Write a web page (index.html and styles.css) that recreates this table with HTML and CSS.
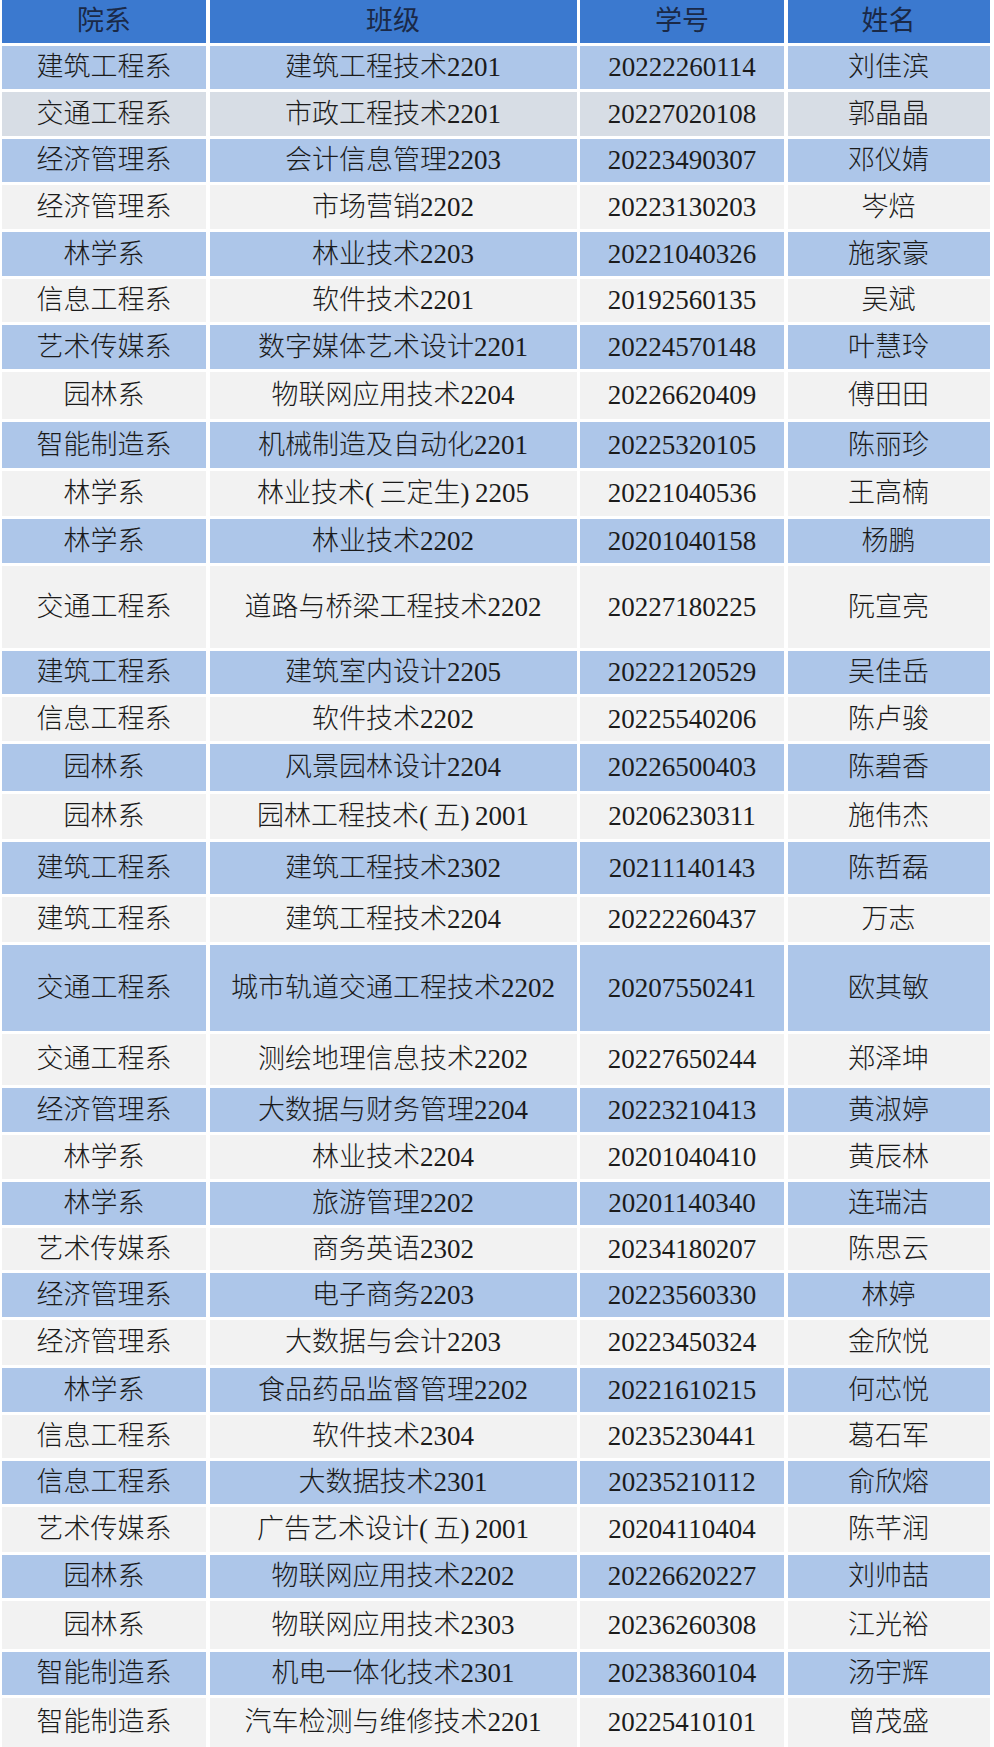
FILE: index.html
```html
<!DOCTYPE html>
<html lang="zh-CN">
<head>
<meta charset="utf-8">
<title>名单</title>
<link rel="stylesheet" href="styles.css">
</head>
<body>
<div class="sheet">
  <div class="row head"><div>院系</div><div>班级</div><div>学号</div><div>姓名</div></div>
  <div class="row blue"><div>建筑工程系</div><div>建筑工程技术2201</div><div>20222260114</div><div>刘佳滨</div></div>
  <div class="row slate"><div>交通工程系</div><div>市政工程技术2201</div><div>20227020108</div><div>郭晶晶</div></div>
  <div class="row blue"><div>经济管理系</div><div>会计信息管理2203</div><div>20223490307</div><div>邓仪婧</div></div>
  <div class="row grey"><div>经济管理系</div><div>市场营销2202</div><div>20223130203</div><div>岑焙</div></div>
  <div class="row blue"><div>林学系</div><div>林业技术2203</div><div>20221040326</div><div>施家豪</div></div>
  <div class="row grey"><div>信息工程系</div><div>软件技术2201</div><div>20192560135</div><div>吴斌</div></div>
  <div class="row blue"><div>艺术传媒系</div><div>数字媒体艺术设计2201</div><div>20224570148</div><div>叶慧玲</div></div>
  <div class="row grey"><div>园林系</div><div>物联网应用技术2204</div><div>20226620409</div><div>傅田田</div></div>
  <div class="row blue"><div>智能制造系</div><div>机械制造及自动化2201</div><div>20225320105</div><div>陈丽珍</div></div>
  <div class="row grey"><div>林学系</div><div>林业技术(&thinsp;三定生)&thinsp;2205</div><div>20221040536</div><div>王高楠</div></div>
  <div class="row blue"><div>林学系</div><div>林业技术2202</div><div>20201040158</div><div>杨鹏</div></div>
  <div class="row grey"><div>交通工程系</div><div>道路与桥梁工程技术2202</div><div>20227180225</div><div>阮宣亮</div></div>
  <div class="row blue"><div>建筑工程系</div><div>建筑室内设计2205</div><div>20222120529</div><div>吴佳岳</div></div>
  <div class="row grey"><div>信息工程系</div><div>软件技术2202</div><div>20225540206</div><div>陈卢骏</div></div>
  <div class="row blue"><div>园林系</div><div>风景园林设计2204</div><div>20226500403</div><div>陈碧香</div></div>
  <div class="row grey"><div>园林系</div><div>园林工程技术(&thinsp;五)&thinsp;2001</div><div>20206230311</div><div>施伟杰</div></div>
  <div class="row blue"><div>建筑工程系</div><div>建筑工程技术2302</div><div>20211140143</div><div>陈哲磊</div></div>
  <div class="row grey"><div>建筑工程系</div><div>建筑工程技术2204</div><div>20222260437</div><div>万志</div></div>
  <div class="row blue"><div>交通工程系</div><div>城市轨道交通工程技术2202</div><div>20207550241</div><div>欧其敏</div></div>
  <div class="row grey"><div>交通工程系</div><div>测绘地理信息技术2202</div><div>20227650244</div><div>郑泽坤</div></div>
  <div class="row blue"><div>经济管理系</div><div>大数据与财务管理2204</div><div>20223210413</div><div>黄淑婷</div></div>
  <div class="row grey"><div>林学系</div><div>林业技术2204</div><div>20201040410</div><div>黄辰林</div></div>
  <div class="row blue"><div>林学系</div><div>旅游管理2202</div><div>20201140340</div><div>连瑞洁</div></div>
  <div class="row grey"><div>艺术传媒系</div><div>商务英语2302</div><div>20234180207</div><div>陈思云</div></div>
  <div class="row blue"><div>经济管理系</div><div>电子商务2203</div><div>20223560330</div><div>林婷</div></div>
  <div class="row grey"><div>经济管理系</div><div>大数据与会计2203</div><div>20223450324</div><div>金欣悦</div></div>
  <div class="row blue"><div>林学系</div><div>食品药品监督管理2202</div><div>20221610215</div><div>何芯悦</div></div>
  <div class="row grey"><div>信息工程系</div><div>软件技术2304</div><div>20235230441</div><div>葛石军</div></div>
  <div class="row blue"><div>信息工程系</div><div>大数据技术2301</div><div>20235210112</div><div>俞欣熔</div></div>
  <div class="row grey"><div>艺术传媒系</div><div>广告艺术设计(&thinsp;五)&thinsp;2001</div><div>20204110404</div><div>陈芊润</div></div>
  <div class="row blue"><div>园林系</div><div>物联网应用技术2202</div><div>20226620227</div><div>刘帅喆</div></div>
  <div class="row grey"><div>园林系</div><div>物联网应用技术2303</div><div>20236260308</div><div>江光裕</div></div>
  <div class="row blue"><div>智能制造系</div><div>机电一体化技术2301</div><div>20238360104</div><div>汤宇辉</div></div>
  <div class="row grey"><div>智能制造系</div><div>汽车检测与维修技术2201</div><div>20225410101</div><div>曾茂盛</div></div>
</div>
</body>
</html>
```

FILE: styles.css
```css
html, body {
  margin: 0;
  padding: 0;
  background: #ffffff;
}

body {
  font-family: "Liberation Serif", "Noto Sans CJK SC", serif;
  font-size: 27px;
  color: #1b1b1b;
}

.sheet {
  display: grid;
  grid-template-columns: 204px 367px 204px 202px;
  grid-template-rows:
    43px 43px 44px 43px 44px 44px 43px 44px 47px 46px
    45px 44px 82px 43px 44px 47px 45px 52px 45px 86px
    51px 44px 44px 43px 42px 44px 45px 44px 43px 43px
    45px 43px 48px 43px 49px;
  column-gap: 3.5px;
  row-gap: 3px;
  padding-left: 2px;
  height: 1747px;
  overflow: hidden;
}

.row {
  display: contents;
}

.row > div {
  display: flex;
  align-items: center;
  justify-content: center;
  white-space: nowrap;
  line-height: 1;
  font-weight: 300;
}

.head > div {
  background: #3b79cf;
  color: #1a2947;
  font-weight: 400;
}

.blue > div {
  background: #adc6e9;
}

.slate > div {
  background: #d7dde5;
}

.grey > div {
  background: #f2f2f2;
}
```
